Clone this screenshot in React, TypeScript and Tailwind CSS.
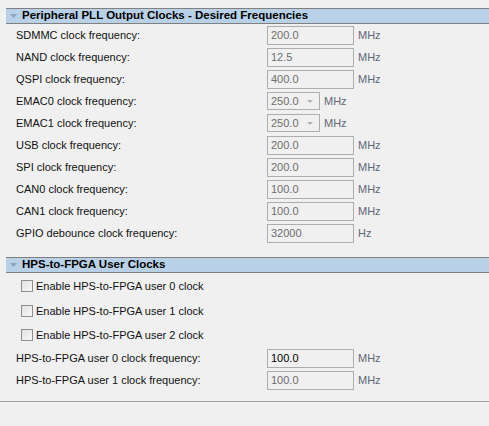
import React from "react";

const font = { fontFamily: '"Liberation Sans", Arial, sans-serif' };

function Header({ title }: { title: string }) {
  return (
    <div className="ml-[6px] flex h-[16px] items-center border-y border-[#808080] bg-[#b9d1e6]">
      <svg width="14" height="10" viewBox="0 0 14 10" className="ml-[1px]">
        <path d="M3 3 L10 3 L6.5 7 Z" fill="#8fa3bb" />
      </svg>
      <span className="ml-[1px] text-[11.5px] font-bold leading-none text-black">{title}</span>
    </div>
  );
}

function TextRow({
  label,
  value,
  unit = "MHz",
  enabled = false,
}: {
  label: string;
  value: string;
  unit?: string;
  enabled?: boolean;
}) {
  return (
    <div className="flex h-[22px] items-center">
      <div className="w-[267px] pl-[16px] text-[11px] text-[#111]">{label}</div>
      <div
        className={`flex h-[19px] w-[87px] items-center border border-[#adadad] pl-[3px] text-[11px] ${
          enabled ? "text-black" : "text-[#6d6d6d]"
        }`}
      >
        {value}
      </div>
      <div className="ml-[4px] text-[11px] text-[#5f6775]">{unit}</div>
    </div>
  );
}

function DropRow({ label, value }: { label: string; value: string }) {
  return (
    <div className="flex h-[22px] items-center">
      <div className="w-[267px] pl-[16px] text-[11px] text-[#111]">{label}</div>
      <div className="flex h-[18px] w-[53px] items-center justify-between border border-[#adadad] pl-[3px] pr-[5px] text-[11px] text-[#6d6d6d]">
        <span>{value}</span>
        <svg width="8" height="6" viewBox="0 0 8 6">
          <path d="M1 2 L7 2 L4 5 Z" fill="#b0b0b0" />
        </svg>
      </div>
      <div className="ml-[4px] text-[11px] text-[#5f6775]">MHz</div>
    </div>
  );
}

function CheckRow({ label }: { label: string }) {
  return (
    <div className="flex h-[24.5px] items-center pl-[21px]">
      <div className="h-[12px] w-[12px] border border-[#8f8f8f] bg-[linear-gradient(135deg,#e2e2e2,#f7f7f7)]" />
      <span className="ml-[3px] text-[11px] text-[#111]">{label}</span>
    </div>
  );
}

export default function App() {
  return (
    <div className="h-[426px] w-[489px] overflow-hidden bg-[#f0f0f0]" style={font}>
      <div className="border-b border-[#a0a0a0] pt-[8px] pb-[9px]">
        <Header title="Peripheral PLL Output Clocks - Desired Frequencies" />
        <div>
          <TextRow label="SDMMC clock frequency:" value="200.0" />
          <TextRow label="NAND clock frequency:" value="12.5" />
          <TextRow label="QSPI clock frequency:" value="400.0" />
          <DropRow label="EMAC0 clock frequency:" value="250.0" />
          <DropRow label="EMAC1 clock frequency:" value="250.0" />
          <TextRow label="USB clock frequency:" value="200.0" />
          <TextRow label="SPI clock frequency:" value="200.0" />
          <TextRow label="CAN0 clock frequency:" value="100.0" />
          <TextRow label="CAN1 clock frequency:" value="100.0" />
          <TextRow label="GPIO debounce clock frequency:" value="32000" unit="Hz" />
        </div>
        <div className="mt-[13px]">
          <Header title="HPS-to-FPGA User Clocks" />
        </div>
        <div className="pt-[1px]">
          <CheckRow label="Enable HPS-to-FPGA user 0 clock" />
          <CheckRow label="Enable HPS-to-FPGA user 1 clock" />
          <CheckRow label="Enable HPS-to-FPGA user 2 clock" />
          <TextRow label="HPS-to-FPGA user 0 clock frequency:" value="100.0" enabled />
          <TextRow label="HPS-to-FPGA user 1 clock frequency:" value="100.0" />
        </div>
      </div>
    </div>
  );
}
